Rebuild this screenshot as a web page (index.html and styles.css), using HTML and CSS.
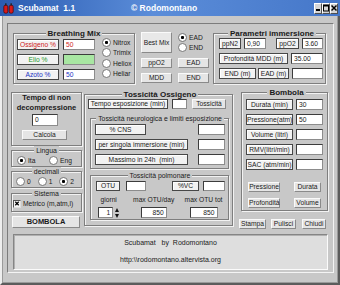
FILE: index.html
```html
<!DOCTYPE html>
<html lang="it">
<head>
<meta charset="UTF-8">
<meta name="viewport" content="width=device-width, initial-scale=1.0">
<title>Scubamat 1.1</title>
<link rel="stylesheet" href="styles.css">
</head>
<body>
<div class="win">
  <div class="titlebar">
    <svg class="app-icon" width="11" height="11" viewBox="0 0 11 11">
      <rect x="0.8" y="2.2" width="4" height="8" rx="1.6" fill="#d81a1a" stroke="#4a0000" stroke-width="0.7"/>
      <rect x="6.2" y="2.2" width="4" height="8" rx="1.6" fill="#d81a1a" stroke="#4a0000" stroke-width="0.7"/>
      <rect x="2.1" y="0.3" width="1.4" height="2.2" fill="#222"/>
      <rect x="7.5" y="0.3" width="1.4" height="2.2" fill="#222"/>
    </svg>
    <span class="app-name">Scubamat&nbsp; 1.1</span>
    <span class="app-author">© Rodomontano</span>
    <div class="win-btns">
      <span class="wbtn"><svg width="6" height="8" viewBox="0 0 6 8"><rect x="1" y="5" width="4" height="2" fill="#000"/></svg></span>
      <span class="wbtn"><svg width="6" height="8" viewBox="0 0 6 8"><rect x="0.5" y="1" width="5" height="6" fill="none" stroke="#000"/><rect x="0.5" y="1" width="5" height="1.5" fill="#000"/></svg></span>
      <span class="wbtn"><svg width="6" height="8" viewBox="0 0 6 8"><path d="M0.5 1.5 L5.5 6.5 M5.5 1.5 L0.5 6.5" stroke="#000" stroke-width="1.5"/></svg></span>
    </div>
  </div>

  <div class="frame">
    <div class="panel">

      <div class="top">
        <div class="grp mix">
          <div class="grp-title">Breathing Mix</div>
          <div class="mix-body">
            <div class="mix-rows">
              <div class="mix-row"><span class="lbl mix-lbl red">Ossigeno %</span><span class="fld mix-fld red">50</span></div>
              <div class="mix-row"><span class="lbl mix-lbl green">Elio %</span><span class="fld mix-fld helium"></span></div>
              <div class="mix-row"><span class="lbl mix-lbl blue">Azoto %</span><span class="fld mix-fld blue">50</span></div>
            </div>
            <div class="mix-radios">
              <span class="radio on">Nitrox</span>
              <span class="radio">Trimix</span>
              <span class="radio">Heliox</span>
              <span class="radio">Heliar</span>
            </div>
          </div>
        </div>

        <div class="mid">
          <div class="btn best">Best Mix</div>
          <div class="mid-radios">
            <span class="radio on">EAD</span>
            <span class="radio">END</span>
          </div>
          <div class="btn">ppO2</div>
          <div class="btn">EAD</div>
          <div class="btn">MDD</div>
          <div class="btn">END</div>
        </div>

        <div class="grp params">
          <div class="grp-title">Parametri immersione</div>
          <div class="par-row">
            <span class="lbl par-ppn2">ppN2</span>
            <span class="fld par-v1">0,90</span>
            <span class="lbl par-ppo2">ppO2</span>
            <span class="fld par-v2">3.60</span>
          </div>
          <div class="par-row">
            <span class="lbl par-mdd">Profondità MDD (m)</span>
            <span class="fld par-mddv">35.00</span>
          </div>
          <div class="par-row">
            <span class="lbl par-end">END (m)</span>
            <span class="lbl par-ead">EAD (m)</span>
            <span class="fld par-eadv"></span>
          </div>
        </div>
      </div>

      <div class="mainrow">
        <div class="leftcol">
          <div class="grp ndl">
            <div class="ndl-title">Tempo di non<br>decompressione</div>
            <div class="fld ndl-fld">0</div>
            <div class="btn calc">Calcola</div>
          </div>
          <div class="grp lang">
            <div class="grp-title plain">Lingua</div>
            <div class="opts">
              <span class="radio on">Ita</span>
              <span class="radio">Eng</span>
            </div>
          </div>
          <div class="grp dec">
            <div class="grp-title plain">decimali</div>
            <div class="opts">
              <span class="radio">0</span>
              <span class="radio">1</span>
              <span class="radio on">2</span>
            </div>
          </div>
          <div class="grp sys">
            <div class="grp-title plain">Sistema</div>
            <div class="opts">
              <span class="check">
                <svg width="7" height="7" viewBox="0 0 7 7"><path d="M1.5 1.5 L5.5 5.5 M5.5 1.5 L1.5 5.5" stroke="#000" stroke-width="1.4"/></svg>
              </span>
              <span>Metrico (m,atm,l)</span>
            </div>
          </div>
          <div class="btn bombola">BOMBOLA</div>
        </div>

        <div class="grp tox">
          <div class="grp-title">Tossicità Ossigeno</div>
          <div class="tox-row">
            <span class="lbl tox-lbl">Tempo esposizione (min)</span>
            <span class="fld tox-fld"></span>
            <span class="btn tox-btn">Tossicità</span>
          </div>

          <div class="grp sub neuro">
            <div class="grp-title plain">Tossicità neurologica e limiti esposizione</div>
            <div class="sub-row"><span class="lbl cns">% CNS</span><span class="fld sub-fld"></span></div>
            <div class="sub-row"><span class="lbl lim">per singola immersione (min)</span><span class="fld sub-fld"></span></div>
            <div class="sub-row"><span class="lbl lim">Massimo in 24h&nbsp; (min)</span><span class="fld sub-fld"></span></div>
          </div>

          <div class="grp sub pulm">
            <div class="grp-title plain">Tossicità polmonare</div>
            <div class="otu-row">
              <span class="lbl otu">OTU</span>
              <span class="fld otu-fld"></span>
              <span class="lbl vc">%VC</span>
              <span class="fld vc-fld"></span>
            </div>
            <div class="otu-grid">
              <div class="otu-col c1">
                <span class="cap">giorni</span>
                <div class="spin">
                  <span class="fld num days">1</span>
                  <span class="arrows"><i class="up"></i><i class="down"></i></span>
                </div>
              </div>
              <div class="otu-col c2">
                <span class="cap">max OTU/day</span>
                <span class="fld num otu-day">850</span>
              </div>
              <div class="otu-col c3">
                <span class="cap">max OTU tot</span>
                <span class="fld num otu-tot">850</span>
              </div>
            </div>
          </div>
        </div>

        <div class="bomb-col">
          <div class="grp bomb">
            <div class="grp-title">Bombola</div>
            <div class="b-row"><span class="lbl b-lbl">Durata (min)</span><span class="fld b-fld">30</span></div>
            <div class="b-row"><span class="lbl b-lbl">Pressione(atm)</span><span class="fld b-fld">50</span></div>
            <div class="b-row"><span class="lbl b-lbl">Volume (litri)</span><span class="fld b-fld"></span></div>
            <div class="b-row"><span class="lbl b-lbl">RMV(litri/min)</span><span class="fld b-fld"></span></div>
            <div class="b-row"><span class="lbl b-lbl">SAC (atm/min)</span><span class="fld b-fld"></span></div>
            <div class="b-btns">
              <div class="btn">Pressione</div>
              <div class="btn">Durata</div>
              <div class="btn">Profondità</div>
              <div class="btn">Volume</div>
            </div>
          </div>
          <div class="bottom-btns">
            <div class="btn stampa">Stampa</div>
            <div class="btn pulisci">Pulisci</div>
            <div class="btn chiudi">Chiudi</div>
          </div>
        </div>
      </div>

      <div class="about">
        <div>Scubamat&nbsp;&nbsp; by&nbsp; Rodomontano</div>
        <div class="url">http:\\rodomontano.altervista.org</div>
      </div>

    </div>
  </div>
</div>
</body>
</html>
```

FILE: styles.css
```css
* {
    box-sizing: border-box;
}
body {
    margin: 0;
    font-family: "Liberation Sans", Arial, sans-serif;
    font-size: 6.7px;
    color: #1a1a1a;
    background: #c8c8c8;
}

/* window chrome */
.win {
    width: 340px;
    height: 285px;
    background: #c8c8c8;
    display: flex;
    flex-direction: column;
    overflow: hidden;
}
.titlebar {
    height: 16px;
    flex: none;
    display: flex;
    align-items: center;
    color: #fff;
    font-weight: bold;
    font-size: 8.5px;
    background: linear-gradient(to right, #2b5cb2, #5b8dd9 45%, #4577c9);
}
.app-icon {
    margin-left: 3px;
}
.app-name {
    margin-left: 4px;
    width: 113px;
}
.win-btns {
    margin-left: auto;
    margin-right: 2px;
    display: flex;
}
.wbtn {
    width: 8px;
    height: 11px;
    background: #d6d6d6;
    border: 1px solid;
    border-color: #fff #505050 #505050 #fff;
    display: flex;
    align-items: center;
    justify-content: center;
}
.frame {
    flex: 1;
    display: flex;
    padding: 7px 4px 10px 5px;
    border: 2px solid;
    border-top: 0;
    border-color: #eee #5c5c5c #5c5c5c #eee;
    box-shadow: inset -1px -1px 0 #9a9a9a, inset 1px 0 0 #9a9a9a;
}
.panel {
    flex: 1;
    border: 1px solid;
    border-color: #7c7c7c #f4f4f4 #f4f4f4 #7c7c7c;
    padding: 9px 0 0 5px;
}

/* common controls */
.grp {
    border: 1px solid #7e7e7e;
    box-shadow: inset 1px 1px 0 #f2f2f2, 1px 1px 0 #f2f2f2;
}
.grp-title {
    width: fit-content;
    height: 9px;
    margin: -5px auto 0;
    padding: 0 2px;
    background: #c8c8c8;
    font-weight: bold;
    font-size: 8px;
    line-height: 9px;
    white-space: nowrap;
}
.grp-title.plain {
    font-weight: normal;
    font-size: 6.9px;
}
.lbl {
    display: block;
    height: 11px;
    line-height: 9px;
    border: 1px solid #474747;
    background: #f2f2f2;
    box-shadow: inset 1px 1px 0 #fff;
    text-align: center;
    white-space: nowrap;
    overflow: hidden;
}
.fld {
    display: block;
    height: 11px;
    line-height: 9px;
    padding: 0 2px;
    border: 1px solid;
    border-color: #3c3c3c #8c8c8c #8c8c8c #3c3c3c;
    background: #fff;
    white-space: nowrap;
}
.fld.num {
    text-align: right;
}
.btn {
    height: 10px;
    line-height: 8px;
    border: 1px solid;
    border-color: #fafafa #8a8a8a #8a8a8a #fafafa;
    background: #e5e5e5;
    text-align: center;
    white-space: nowrap;
}
.radio {
    display: flex;
    align-items: center;
    gap: 2px;
    white-space: nowrap;
}
.radio::before {
    content: "";
    flex: none;
    width: 7px;
    height: 7px;
    border-radius: 50%;
    border: 1px solid #777;
    background: #fff;
}
.radio.on::before {
    background: radial-gradient(circle, #000 0 1.3px, #fff 1.8px);
}
.red { color: #d01c1c; }
.green { color: #1f9a2a; }
.blue { color: #2232c4; }

/* top row */
.top {
    display: flex;
    height: 51px;
}
.mix {
    width: 122px;
    height: 51px;
}
.mix-body {
    display: flex;
    padding: 1px 0 0 3px;
}
.mix-rows {
    display: flex;
    flex-direction: column;
    gap: 4px;
}
.mix-row {
    display: flex;
    gap: 4px;
}
.mix-lbl {
    width: 42px;
}
.mix-fld {
    width: 32px;
}
.mix-fld.helium {
    background: #a8e6a2;
}
.mix-radios {
    margin: -2px 0 0 7px;
    display: flex;
    flex-direction: column;
}
.mix-radios .radio {
    height: 10.5px;
}
.mid {
    width: 69px;
    margin: -1px 0 0 6px;
    display: grid;
    grid-template-columns: 31px 31px;
    grid-template-rows: 21px 10px 10px;
    column-gap: 6px;
    row-gap: 5px;
}
.btn.best {
    height: 21px;
    line-height: 19px;
    background: #e8e8e8;
}
.mid-radios {
    display: flex;
    flex-direction: column;
}
.mid-radios .radio {
    height: 11px;
}
.params {
    width: 113px;
    height: 51px;
    margin-left: 3px;
    padding-left: 5px;
}
.par-row {
    display: flex;
    height: 11px;
    margin-top: 4px;
}
.grp-title + .par-row {
    margin-top: 0;
}
.par-ppn2 { width: 22px; }
.par-v1 { width: 22px; margin-left: 3px; }
.par-ppo2 { width: 23px; margin-left: 10px; }
.par-v2 { width: 21px; margin-left: 3px; }
.par-mdd { width: 69px; }
.par-mddv { width: 32px; margin-left: 3px; }
.par-end { width: 37px; }
.par-ead { width: 31px; margin-left: 2px; }
.par-eadv { width: 31px; margin-left: 3px; }

/* main row */
.mainrow {
    display: flex;
    height: 137px;
    margin: 8px 0 0 -2px;
}
.leftcol {
    width: 71px;
    display: flex;
    flex-direction: column;
}
.ndl {
    height: 54px;
}
.ndl-title {
    font-weight: bold;
    font-size: 7.5px;
    line-height: 10px;
    text-align: center;
}
.ndl-fld {
    width: 26px;
    height: 12px;
    line-height: 10px;
    margin: 1px 0 0 20px;
}
.calc {
    width: 45px;
    margin: 4px 0 0 10px;
}
.opts {
    display: flex;
    align-items: center;
    height: 10px;
}
.lang {
    height: 17px;
    margin-top: 4px;
}
.lang .opts {
    padding-left: 5px;
}
.lang .radio {
    width: 38px;
}
.dec {
    height: 17px;
    margin-top: 4px;
}
.dec .opts {
    padding-left: 4px;
}
.dec .radio {
    width: 23px;
}
.sys {
    height: 19px;
    margin-top: 5px;
}
.sys .opts {
    height: 11px;
    padding-left: 1px;
    gap: 2px;
}
.check {
    width: 8px;
    height: 8px;
    border: 1px solid;
    border-color: #555 #ddd #ddd #555;
    background: #f4f4f4;
    display: flex;
    align-items: center;
    justify-content: center;
}
.btn.bombola {
    width: 68px;
    height: 12px;
    line-height: 10px;
    margin: 4px 0 0 1px;
    font-weight: bold;
    font-size: 7.5px;
}

/* tossicita */
.tox {
    width: 149px;
    height: 132px;
    margin: 2px 0 0 2px;
    padding-left: 3px;
}
.tox-row {
    display: flex;
    height: 10px;
}
.tox-row .lbl,
.tox-row .fld {
    height: 10px;
    line-height: 8px;
}
.tox-lbl { width: 80px; }
.tox-fld { width: 15px; margin-left: 4px; }
.tox-btn { width: 34px; margin-left: 5px; }
.sub {
    width: 139px;
    margin: 9px 0 0 2px;
    padding: 0 3px 0 4px;
}
.neuro {
    height: 51px;
}
.sub-row {
    display: flex;
    height: 11px;
    margin-top: 4px;
}
.grp-title + .sub-row {
    margin-top: 1px;
}
.cns { width: 51px; }
.lim { width: 93px; }
.sub-fld {
    width: 27px;
    margin-left: auto;
}
.pulm {
    height: 45px;
    margin-top: 6px;
}
.otu-row {
    display: flex;
    height: 10px;
    margin: 1px 0 0 1px;
}
.otu-row .lbl,
.otu-row .fld {
    height: 10px;
    line-height: 8px;
}
.otu { width: 24px; }
.otu-fld { width: 20px; margin-left: 6px; }
.vc { width: 27px; margin-left: 26px; }
.vc-fld { width: 22px; margin-left: 4px; }
.otu-grid {
    display: flex;
    margin: 4px 0 0 1px;
}
.otu-col {
    display: flex;
    flex-direction: column;
    align-items: center;
}
.otu-col .cap {
    line-height: 9px;
    margin-bottom: 3px;
}
.c1 { width: 26px; }
.c2 { width: 56px; margin-left: 5px; }
.c3 { width: 44px; margin-left: 1px; }
.spin {
    display: flex;
    align-items: center;
    gap: 2px;
}
.days { width: 15px; }
.otu-day { width: 26px; }
.otu-tot { width: 28px; }
.arrows {
    display: flex;
    flex-direction: column;
    gap: 2px;
}
.arrows i {
    width: 0;
    height: 0;
    border-left: 2.5px solid transparent;
    border-right: 2.5px solid transparent;
}
.arrows .up {
    border-bottom: 4px solid #111;
}
.arrows .down {
    border-top: 4px solid #111;
}

/* bombola */
.bomb-col {
    width: 87px;
    margin-left: 8px;
    display: flex;
    flex-direction: column;
}
.bomb {
    height: 119px;
    padding-left: 4px;
}
.b-row {
    display: flex;
    height: 11px;
    margin-top: 4px;
}
.grp-title + .b-row {
    margin-top: 2px;
}
.b-lbl { width: 47px; }
.b-fld { width: 27px; margin-left: 3px; }
.b-btns {
    display: grid;
    grid-template-columns: 32px 27px;
    grid-auto-rows: 10px;
    column-gap: 14px;
    row-gap: 6px;
    margin: 12px 0 0 2px;
}
.bottom-btns {
    display: flex;
    margin: 8px 0 0 -2px;
}
.stampa { width: 27px; }
.pulisci { width: 25px; margin-left: 5px; }
.chiudi { width: 24px; margin-left: 6px; }

/* about box */
.about {
    width: 315px;
    height: 36px;
    margin-top: 5px;
    padding-top: 3px;
    border: 1px solid;
    border-color: #858585 #fbfbfb #fbfbfb #858585;
    box-shadow: inset 1px 1px 0 #b0b0b0;
    background: #dedede;
    font-size: 7px;
    text-align: center;
    line-height: 9px;
}
.about .url {
    margin-top: 8px;
}
```
